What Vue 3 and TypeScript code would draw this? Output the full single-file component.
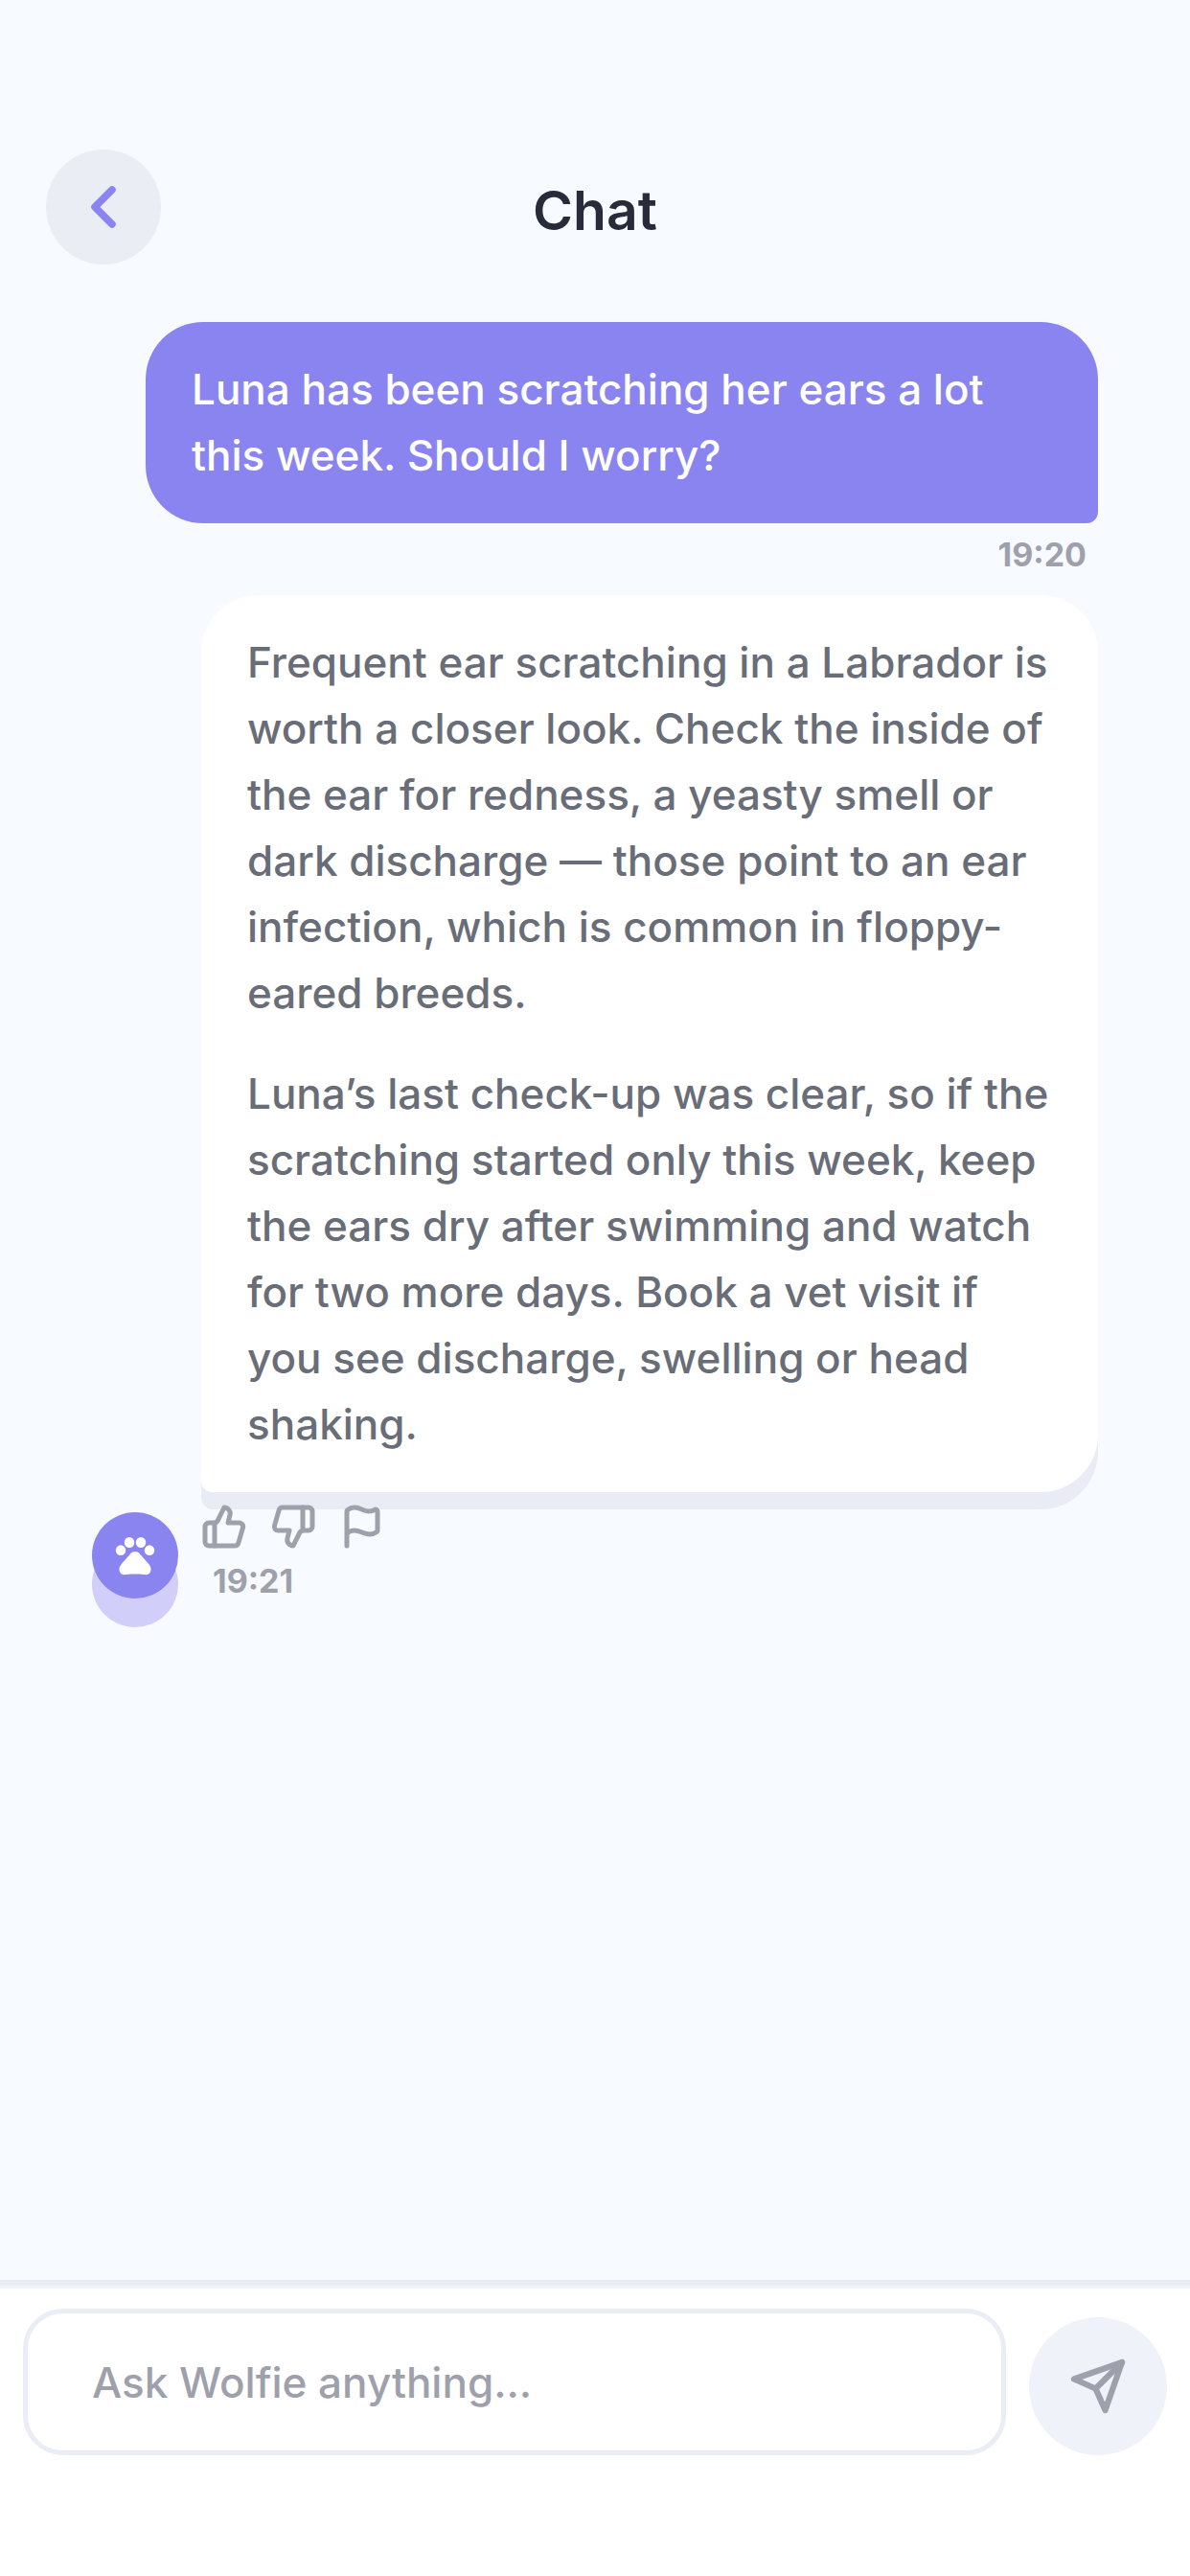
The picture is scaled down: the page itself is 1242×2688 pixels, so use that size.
<script setup lang="ts">
import { ref } from 'vue'

interface Message {
  id: number
  author: 'user' | 'assistant'
  paragraphs: string[]
  time: string
}

const messages: Message[] = [
  {
    id: 1,
    author: 'user',
    paragraphs: ['Luna has been scratching her ears a lot this week. Should I worry?'],
    time: '19:20',
  },
  {
    id: 2,
    author: 'assistant',
    paragraphs: [
      'Frequent ear scratching in a Labrador is worth a closer look. Check the inside of the ear for redness, a yeasty smell or dark discharge — those point to an ear infection, which is common in floppy-eared breeds.',
      'Luna’s last check-up was clear, so if the scratching started only this week, keep the ears dry after swimming and watch for two more days. Book a vet visit if you see discharge, swelling or head shaking.',
    ],
    time: '19:21',
  },
]

const draft = ref('')
</script>

<template>
  <div class="screen">
    <header class="header">
      <button class="back" type="button" aria-label="Back">
        <svg viewBox="0 0 24 24"><path d="m15 18-6-6 6-6" /></svg>
      </button>
      <h1 class="title">Chat</h1>
    </header>

    <main class="thread">
      <article v-for="m in messages" :key="m.id" class="message" :class="m.author">
        <div v-if="m.author === 'assistant'" class="avatar">
          <svg viewBox="0 0 42 42">
            <ellipse cx="6" cy="15.700" rx="5.200" ry="5.400" />
            <ellipse cx="15" cy="7.500" rx="5.200" ry="5.500" />
            <ellipse cx="27" cy="7.500" rx="5.200" ry="5.500" />
            <ellipse cx="36" cy="15.700" rx="5.200" ry="5.400" />
            <path d="M21 17c2.500 0 4 1.200 5.600 3.200l7.800 8.800c2.200 2.600 3.400 4.800 3.100 7.300-.3 2.800-2.200 4.900-4.700 4.900-3 0-6.500-.7-11.800-.7s-8.800.7-11.800.7c-2.500 0-4.400-2.100-4.700-4.900-.3-2.500.9-4.700 3.100-7.300l7.800-8.800c1.600-2 3.100-3.200 5.600-3.200z" />
          </svg>
        </div>
        <div class="body">
          <div class="bubble">
            <p v-for="(p, i) in m.paragraphs" :key="i">{{ p }}</p>
          </div>
          <div v-if="m.author === 'assistant'" class="actions">
            <button type="button" aria-label="Good answer">
              <svg viewBox="0 0 24 24">
                <path d="M7 10v12" />
                <path d="M15 5.880 14 10h5.830a2 2 0 0 1 1.920 2.560l-2.330 8A2 2 0 0 1 17.500 22H4a2 2 0 0 1-2-2v-8a2 2 0 0 1 2-2h2.760a2 2 0 0 0 1.790-1.110L12 2a3.130 3.130 0 0 1 3 3.880Z" />
              </svg>
            </button>
            <button type="button" aria-label="Bad answer">
              <svg viewBox="0 0 24 24">
                <path d="M17 14V2" />
                <path d="M9 18.120 10 14H4.170a2 2 0 0 1-1.920-2.560l2.330-8A2 2 0 0 1 6.500 2H20a2 2 0 0 1 2 2v8a2 2 0 0 1-2 2h-2.760a2 2 0 0 0-1.790 1.110L12 22a3.130 3.130 0 0 1-3-3.880Z" />
              </svg>
            </button>
            <button type="button" aria-label="Report">
              <svg viewBox="0 0 24 24">
                <path d="M4 22V4a1 1 0 0 1 .4-.8A6 6 0 0 1 8 2c3 0 5 2 7.333 2q2 0 3.067-.8A1 1 0 0 1 20 4v10a1 1 0 0 1-.4.8A6 6 0 0 1 16 16c-3 0-5-2-8-2a6 6 0 0 0-4 1.528" />
              </svg>
            </button>
          </div>
          <time class="time">{{ m.time }}</time>
        </div>
      </article>
    </main>

    <form class="composer" @submit.prevent>
      <input v-model="draft" class="field" type="text" placeholder="Ask Wolfie anything..." aria-label="Message" />
      <button class="send" type="submit" aria-label="Send">
        <svg viewBox="0 0 24 24">
          <path d="m22 2-7 20-4-9-9-4Z" />
          <path d="M22 2 11 13" />
        </svg>
      </button>
    </form>
  </div>
</template>

<style>
body {
  margin: 0;
  background: #f7fbff;
}
</style>

<style scoped>
.screen {
  display: flex;
  flex-direction: column;
  min-height: 100vh;
  background: #f7fbff;
  color: #686d78;
  font-family: Inter, 'Liberation Sans', sans-serif;
  font-size: 44px;
  font-weight: 500;
  line-height: 69px;
}

button {
  display: flex;
  align-items: center;
  justify-content: center;
  margin: 0;
  padding: 0;
  border: 0;
  background: none;
  color: inherit;
}

svg {
  display: block;
  fill: none;
  stroke: currentColor;
  stroke-width: 2.5;
  stroke-linecap: round;
  stroke-linejoin: round;
}

.header {
  display: grid;
  grid-template-columns: 120px 1fr 120px;
  align-items: center;
  padding: 156px 48px 60px;
}

.back {
  width: 120px;
  height: 120px;
  border-radius: 50%;
  background: #eaedf4;
  color: #8a84f1;
}

.back svg {
  width: 72px;
  height: 72px;
}

.title {
  margin: 0;
  padding-top: 6px;
  color: #282b3a;
  font-size: 57px;
  font-weight: 600;
  text-align: center;
}

.thread {
  display: flex;
  flex: 1;
  flex-direction: column;
  gap: 21px;
  padding: 0 96px;
}

.message {
  display: flex;
  align-items: flex-end;
  gap: 24px;
}

.user {
  justify-content: flex-end;
}

.body {
  display: flex;
  flex-direction: column;
}

.user .body {
  width: 994px;
  max-width: 100%;
  align-items: flex-end;
}

.assistant .body {
  flex: 1;
}

.bubble {
  display: flex;
  flex-direction: column;
  gap: 36px;
  box-sizing: border-box;
  width: 100%;
  padding: 36px 48px;
}

.bubble p {
  margin: 0;
}

.user .bubble {
  border-radius: 60px 60px 12px 60px;
  background: #8a84f1;
  color: #fff;
}

.assistant .bubble {
  border-radius: 60px 60px 60px 12px;
  background: #fff;
  box-shadow: 0 18px 0 #e9ecf4;
}

.time {
  margin: 12px 12px 0;
  color: #9ea1ab;
  font-size: 34px;
  font-weight: 700;
  line-height: 42px;
}

.actions {
  position: relative;
  display: flex;
  gap: 24px;
  padding-top: 12px;
  color: #9ea1ab;
}

.actions svg {
  width: 48px;
  height: 48px;
}

.avatar {
  display: flex;
  flex: none;
  align-items: center;
  justify-content: center;
  width: 90px;
  height: 90px;
  margin-bottom: 3px;
  border-radius: 50%;
  background: #8a84f1;
  box-shadow: 0 30px 0 #d1cef9;
}

.avatar svg {
  width: 42px;
  height: 42px;
  fill: #fff;
  stroke: none;
}

.composer {
  display: flex;
  align-items: flex-end;
  gap: 24px;
  padding: 21px 24px 126px;
  border-top: 3px solid #f0f3f8;
  background: #fff;
  box-shadow: 0 -6px 0 #e9edf3;
}

.field {
  box-sizing: border-box;
  flex: 1;
  min-width: 0;
  height: 153px;
  padding: 0 67px;
  border: 5px solid #eaedf5;
  border-radius: 42px;
  background: #fff;
  color: #282b3a;
  font: inherit;
}

.field::placeholder {
  color: #9ea1ab;
  opacity: 1;
}

.send {
  flex: none;
  width: 144px;
  height: 144px;
  border-radius: 50%;
  background: #eff2f8;
  color: #9ea1ab;
}

.send svg {
  width: 60px;
  height: 60px;
}
</style>
